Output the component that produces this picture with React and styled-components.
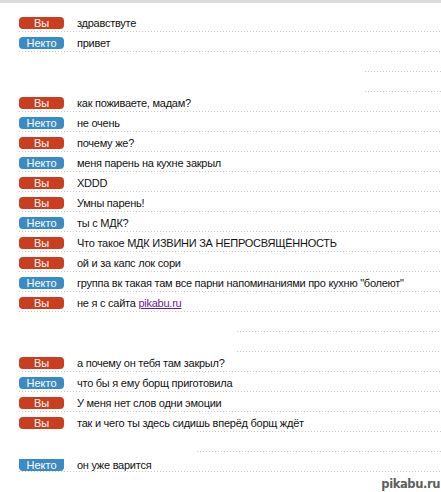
import React from "react";
import styled, { createGlobalStyle } from "styled-components";

const Global = createGlobalStyle`
  html, body { margin: 0; padding: 0; background: #fff; }
  body { font-family: "Liberation Sans", Arial, sans-serif; }
`;

const Page = styled.div`
  position: relative;
  width: 100vw;
  height: 492px;
  overflow: hidden;
  background: #fff;
`;

const TopBar = styled.div`
  height: 3px;
  background: #dcdcdc;
`;

const Log = styled.div`
  display: flex;
  flex-direction: column;
  padding-top: 9px;
`;

const Row = styled.div`
  display: flex;
  flex-direction: column;
`;

const Line = styled.div`
  display: flex;
  align-items: flex-start;
  gap: 13px;
  height: 19px;
  padding-left: 19px;
  box-sizing: border-box;
  padding-top: 5px;
`;

const Badge = styled.span`
  flex: 0 0 45px;
  height: 12px;
  margin-top: ${(p) => (p.$cut ? "2px" : "0")};
  border-radius: ${(p) => (p.$cut ? "0 0 4px 4px" : "4px")};
  background: ${(p) => (p.$who === "you" ? "#cb3d1f" : "#3a8bc3")};
  color: #fff;
  font-size: 11px;
  line-height: 12px;
  text-align: center;
`;

const Text = styled.span`
  font-size: 11px;
  letter-spacing: -0.25px;
  line-height: 12px;
  color: #111;
  white-space: nowrap;
  margin-top: ${(p) => (p.$cut ? "2px" : "0")};
`;

const Link = styled.a`
  color: #6a1b9a;
  text-decoration: underline;
`;

const Rule = styled.div`
  height: 1px;
  margin-left: ${(p) => p.$from}px;
  background-image: linear-gradient(to right, #c8c8c8 1px, transparent 1px);
  background-size: 3px 1px;
`;

const Watermark = styled.div`
  position: absolute;
  right: 1px;
  bottom: 1px;
  font-family: "DejaVu Sans", sans-serif;
  font-size: 11.5px;
  font-weight: bold;
  color: #5e5e5e;
  letter-spacing: -0.4px;
  text-shadow: -1px 0 #fff, 1px 0 #fff, 0 -1px #fff, 0 1px #fff;
`;

const YOU = "you";
const HIM = "him";

const rows = [
  { who: YOU, text: "здравствуте" },
  { who: HIM, text: "привет" },
  { rule: 365 },
  { rule: 365 },
  { who: YOU, text: "как поживаете, мадам?" },
  { who: HIM, text: "не очень" },
  { who: YOU, text: "почему же?" },
  { who: HIM, text: "меня парень на кухне закрыл" },
  { who: YOU, text: "XDDD" },
  { who: YOU, text: "Умны парень!" },
  { who: HIM, text: "ты с МДК?" },
  { who: YOU, text: "Что такое МДК ИЗВИНИ ЗА НЕПРОСВЯЩЁННОСТЬ" },
  { who: YOU, text: "ой и за капс лок сори" },
  { who: HIM, text: "группа вк такая там все парни напоминаниями про кухню \"болеют\"" },
  { who: YOU, text: "не я с сайта ", link: "pikabu.ru" },
  { rule: 237 },
  { rule: 237 },
  { who: YOU, text: "а почему он тебя там закрыл?" },
  { who: HIM, text: "что бы я ему борщ приготовила" },
  { who: YOU, text: "У меня нет слов одни эмоции" },
  { who: YOU, text: "так и чего ты здесь сидишь вперёд борщ ждёт", rule: 197 },
  { rule: 197 },
  { who: HIM, text: "он уже варится", cut: true },
];

export default function App() {
  return (
    <Page>
      <Global />
      <TopBar />
      <Log>
        {rows.map((r, i) => (
          <Row key={i}>
            <Line>
              {r.who && (
                <>
                  <Badge $who={r.who} $cut={r.cut}>
                    {r.who === YOU ? "Вы" : "Некто"}
                  </Badge>
                  <Text $cut={r.cut}>
                    {r.text}
                    {r.link && <Link href="#">{r.link}</Link>}
                  </Text>
                </>
              )}
            </Line>
            <Rule $from={r.rule || 19} />
          </Row>
        ))}
      </Log>
      <Watermark>pikabu.ru</Watermark>
    </Page>
  );
}
